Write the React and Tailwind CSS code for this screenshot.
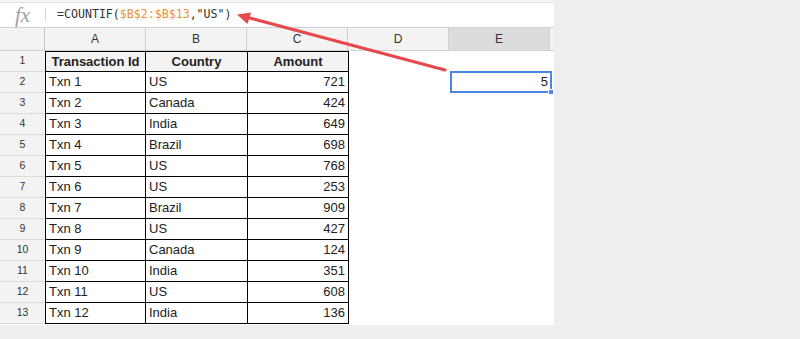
import React from 'react';

const rows = [
  ['Txn 1', 'US', 721],
  ['Txn 2', 'Canada', 424],
  ['Txn 3', 'India', 649],
  ['Txn 4', 'Brazil', 698],
  ['Txn 5', 'US', 768],
  ['Txn 6', 'US', 253],
  ['Txn 7', 'Brazil', 909],
  ['Txn 8', 'US', 427],
  ['Txn 9', 'Canada', 124],
  ['Txn 10', 'India', 351],
  ['Txn 11', 'US', 608],
  ['Txn 12', 'India', 136],
];

const cols = ['A', 'B', 'C', 'D', 'E'];

const App = () => {
  return (
    <div className="relative w-[800px] h-[339px] bg-[#eeeeee] overflow-hidden font-['Liberation_Sans',Arial,sans-serif] text-[#222]">
      <div className="w-[554px] bg-white">
        {/* toolbar remnant */}
        <div className="h-[3px] bg-[#f5f5f5] border-b border-[#e2e2e2]" />

        {/* Formula bar */}
        <div className="flex items-center h-[25px] border-b border-[#d0d0d0]">
          <div className="w-[45px] flex justify-center">
            <span className="font-['Liberation_Serif',serif] italic text-[21px] text-[#a0a0a0] leading-none">fx</span>
          </div>
          <div className="w-px h-[14px] bg-[#d5d5d5]" />
          <div className="pl-[11px] font-['DejaVu_Sans_Mono',monospace] text-[11.6px] text-[#333]">
            =COUNTIF(<span className="text-[#e69138]">$B$2:$B$13</span>,"US")
          </div>
        </div>

        {/* Column header */}
        <div className="flex h-[23px] bg-[#f3f3f3] border-b border-[#cfcfcf] text-[12px] text-[#333]">
          <div className="w-[45px] border-r border-[#c7c7c7]" />
          {cols.map((c) => (
            <div
              key={c}
              className={`w-[101px] flex items-center justify-center border-r border-[#d0d0d0] ${c === 'E' ? 'bg-[#dcdcdc]' : ''}`}
            >
              {c}
            </div>
          ))}
        </div>

        {/* Header row */}
        <div className="flex h-[21px]">
          <div className="w-[45px] bg-[#f3f3f3] border-b border-[#dadada] flex items-center justify-center text-[10.5px] text-[#333]">1</div>
          <div className="w-[101px] bg-[#f3f3f3] border border-black flex items-center justify-center font-bold text-[13px]">Transaction Id</div>
          <div className="w-[102px] bg-[#f3f3f3] border-y border-r border-black flex items-center justify-center font-bold text-[13px]">Country</div>
          <div className="w-[101px] bg-[#f3f3f3] border-y border-r border-black flex items-center justify-center font-bold text-[13px]">Amount</div>
        </div>

        {rows.map(([id, country, amount], i) => (
          <div key={id} className="relative flex h-[21px]">
            <div className="w-[45px] bg-[#f3f3f3] border-b border-[#dadada] flex items-center justify-center text-[10.5px] text-[#333]">
              {i + 2}
            </div>
            <div className="w-[101px] border-x border-b border-black flex items-center pl-[3px] text-[13px]">{id}</div>
            <div className="w-[102px] border-r border-b border-black flex items-center pl-[3px] text-[13px]">{country}</div>
            <div className="w-[101px] border-r border-b border-black flex items-center justify-end pr-[3px] text-[13px]">{amount}</div>
            {i === 0 && (
              <div className="ml-[101px] relative w-[102px] h-[22px] -mt-px border-2 border-[#4a86e8] flex items-center justify-end pr-[2px] text-[13px]">
                5
                <div className="absolute -right-[4px] -bottom-[4px] w-[6px] h-[6px] bg-[#4a86e8] border border-white" />
              </div>
            )}
          </div>
        ))}
        <div className="h-[1px]" />
      </div>

      {/* Annotation arrow */}
      <svg className="absolute left-0 top-0 pointer-events-none" width="800" height="339">
        <line x1="445" y1="70" x2="246" y2="17" stroke="#e8474c" strokeWidth="3" strokeLinecap="round" />
        <polygon points="237,14.5 251,12.5 247.5,24" fill="#e8474c" />
      </svg>
    </div>
  );
};

export default App;
